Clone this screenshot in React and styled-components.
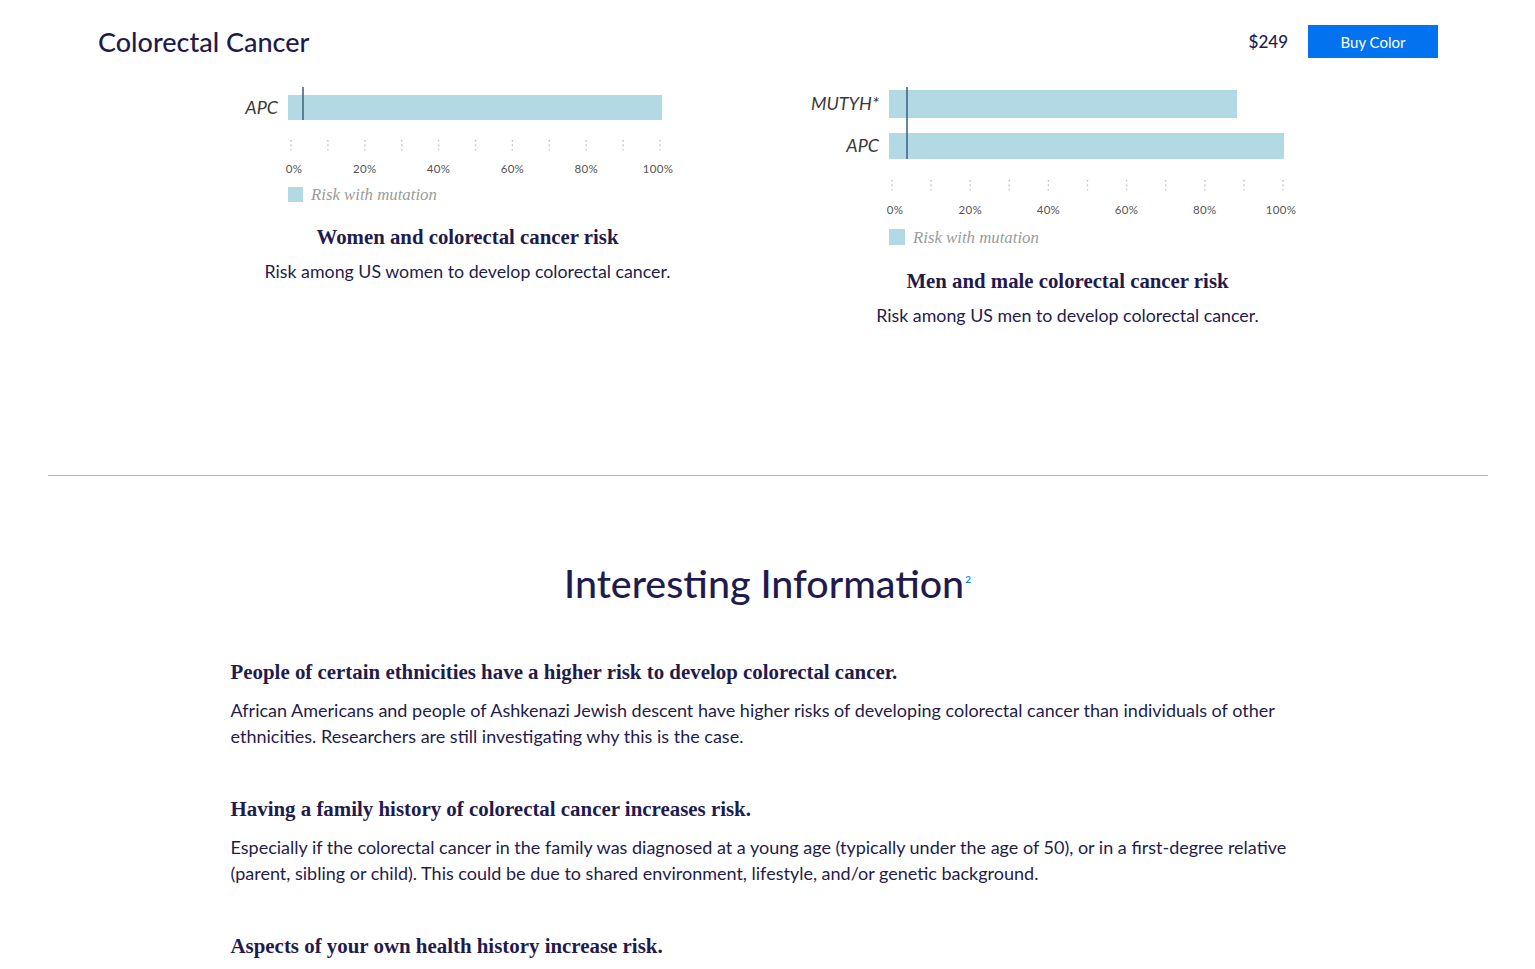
import React from 'react'
import styled, { createGlobalStyle } from 'styled-components'

const GlobalStyle = createGlobalStyle`
  html, body {
    margin: 0;
    padding: 0;
    background: #fff;
  }
  body {
    font-family: Lato, "Noto Sans", sans-serif;
    color: #1f1c4d;
  }
`

const sans = `Lato, "Noto Sans", sans-serif`
const serif = `"Liberation Serif", "DejaVu Serif", serif`

const Page = styled.div`
  width: 1535px;
`

const Header = styled.header`
  display: flex;
  align-items: center;
  height: 33px;
  padding: 25px 97px 0 98px;
`

const Title = styled.h1`
  flex: 1;
  margin: 0;
  font-family: ${sans};
  font-weight: 500;
  font-size: 27px;
  line-height: 33px;
  color: #1f1c4d;
`

const Price = styled.span`
  font-size: 17px;
  font-weight: 500;
  color: #1f1c4d;
  margin-right: 20px;
`

const BuyButton = styled.button`
  width: 130px;
  height: 33px;
  border: none;
  border-radius: 0;
  background: #0272ef;
  color: #fff;
  font-family: ${sans};
  font-size: 15px;
  cursor: pointer;
`

const ChartsRow = styled.section`
  display: grid;
  grid-template-columns: 600px 600px;
  justify-content: center;
  padding: 22px 0 148px;
`

const ChartColumn = styled.div`
  display: flex;
  flex-direction: column;
  align-items: center;
`

const ChartSvg = styled.svg`
  display: block;
`

const CaptionTitle = styled.h3`
  margin: ${p => p.$gap}px 0 0;
  font-family: ${serif};
  font-weight: 700;
  font-size: 20.8px;
  line-height: 24px;
  color: #1f1c4d;
  text-align: center;
`

const CaptionText = styled.p`
  margin: 10px 0 0;
  font-size: 17.8px;
  line-height: 24px;
  color: #1f1c4d;
  text-align: center;
`

const Divider = styled.hr`
  margin: 0 47px 0 48px;
  border: none;
  border-top: 1px solid #b5b5b5;
`

const InfoSection = styled.section`
  width: 1074px;
  margin: 0 auto;
  padding-top: 84px;
`

const InfoTitle = styled.h2`
  margin: 0 0 53px;
  text-align: center;
  font-family: ${sans};
  font-weight: 500;
  font-size: 39.4px;
  line-height: 46px;
  color: #1f1c4d;

  sup {
    font-size: 10px;
    line-height: 10px;
    color: #0272ef;
    vertical-align: top;
    position: relative;
    top: 14px;
    margin-left: 1px;
  }
`

const Fact = styled.article`
  margin-bottom: 47px;
`

const FactTitle = styled.h4`
  margin: 0 0 12px;
  font-family: ${serif};
  font-weight: 700;
  font-size: 20.9px;
  line-height: 26px;
  color: #1f1c4d;
`

const FactText = styled.p`
  margin: 0;
  font-size: 18px;
  line-height: 26px;
  color: #1f1c4d;
`

const BAR = '#b3d9e4'

function RiskChart({ width, height, labelEnd, barX, bars, markerX, markerTop, tickX, tickStep, tickTop, tickLabelY, legendY, legendSize }) {
  const ticks = Array.from({ length: 11 }, (_, i) => tickX + i * tickStep)
  const last = bars[bars.length - 1]
  return (
    <ChartSvg width={width} height={height} viewBox={`0 0 ${width} ${height}`}>
      {bars.map(b => (
        <g key={b.label}>
          <text x={labelEnd} y={b.y + b.h / 2 + 6} textAnchor="end" fontFamily={sans} fontStyle="italic" fontSize="18" fill="#3a3a3a">
            {b.label}
          </text>
          <rect x={barX} y={b.y} width={b.w} height={b.h} fill={BAR} />
        </g>
      ))}
      <line x1={markerX} x2={markerX} y1={markerTop} y2={last.y + last.h} stroke="#3c6a84" strokeWidth="1.6" />
      {ticks.map(x => (
        <line key={x} x1={x} x2={x} y1={tickTop} y2={tickTop + 12} stroke="#bdbdbd" strokeWidth="1.4" strokeDasharray="1.4 3.2" />
      ))}
      {ticks.filter((_, i) => i % 2 === 0).map((x, i) => (
        <text key={x} x={x + (i === 0 ? 3 : i === 5 ? -2 : 0)} y={tickLabelY} textAnchor="middle" fontFamily={sans} fontSize="11.5" fill="#555" letterSpacing="0.3">
          {i * 20}%
        </text>
      ))}
      <rect x={barX} y={legendY} width={legendSize} height={legendSize} fill={BAR} />
      <text x={barX + legendSize + 8} y={legendY + legendSize - 2} fontFamily={serif} fontStyle="italic" fontSize="16.8" fill="#9b9b9b">
        Risk with mutation
      </text>
    </ChartSvg>
  )
}

const facts = [
  {
    title: 'People of certain ethnicities have a higher risk to develop colorectal cancer.',
    text: 'African Americans and people of Ashkenazi Jewish descent have higher risks of developing colorectal cancer than individuals of other ethnicities. Researchers are still investigating why this is the case.',
  },
  {
    title: 'Having a family history of colorectal cancer increases risk.',
    text: 'Especially if the colorectal cancer in the family was diagnosed at a young age (typically under the age of 50), or in a first-degree relative (parent, sibling or child). This could be due to shared environment, lifestyle, and/or genetic background.',
  },
  {
    title: 'Aspects of your own health history increase risk.',
    text: '',
  },
]

export default function App() {
  return (
    <Page>
      <GlobalStyle />
      <Header>
        <Title>Colorectal Cancer</Title>
        <Price>$249</Price>
        <BuyButton>Buy Color</BuyButton>
      </Header>

      <ChartsRow>
        <ChartColumn>
          <RiskChart
            width={460}
            height={130}
            labelEnd={40}
            barX={50}
            bars={[{ label: 'APC', y: 15, h: 25, w: 374 }]}
            markerX={65}
            markerTop={7}
            tickX={53}
            tickStep={36.9}
            tickTop={60}
            tickLabelY={93}
            legendY={107}
            legendSize={15}
          />
          <CaptionTitle $gap={15}>Women and colorectal cancer risk</CaptionTitle>
          <CaptionText>Risk among US women to develop colorectal cancer.</CaptionText>
        </ChartColumn>
        <ChartColumn>
          <RiskChart
            width={520}
            height={175}
            labelEnd={71}
            barX={81}
            bars={[
              { label: 'MUTYH*', y: 10, h: 28, w: 348 },
              { label: 'APC', y: 53, h: 26, w: 395 },
            ]}
            markerX={99}
            markerTop={7}
            tickX={84}
            tickStep={39.1}
            tickTop={100}
            tickLabelY={134}
            legendY={149}
            legendSize={16}
          />
          <CaptionTitle $gap={14}>Men and male colorectal cancer risk</CaptionTitle>
          <CaptionText>Risk among US men to develop colorectal cancer.</CaptionText>
        </ChartColumn>
      </ChartsRow>

      <Divider />

      <InfoSection>
        <InfoTitle>
          Interesting Information<sup>2</sup>
        </InfoTitle>
        {facts.map(f => (
          <Fact key={f.title}>
            <FactTitle>{f.title}</FactTitle>
            {f.text && <FactText>{f.text}</FactText>}
          </Fact>
        ))}
      </InfoSection>
    </Page>
  )
}
